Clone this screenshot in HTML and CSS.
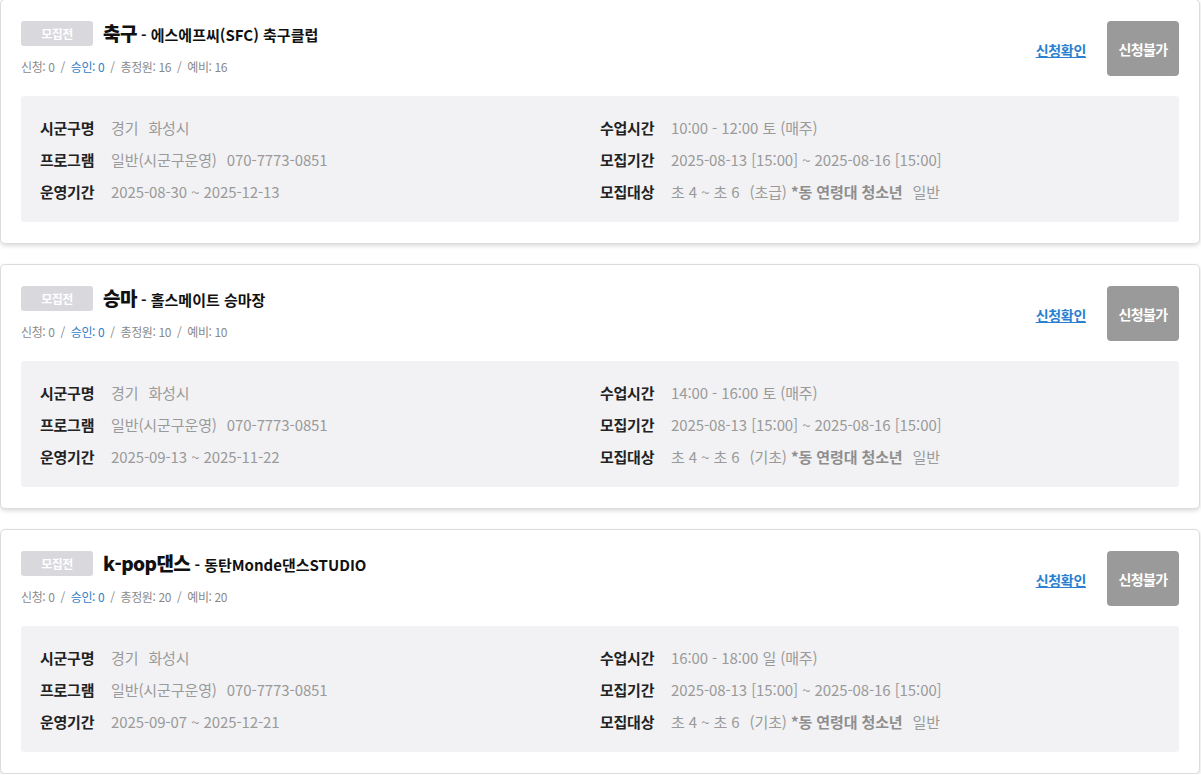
FILE: index.html
```html
<!DOCTYPE html>
<html lang="ko">
<head>
<meta charset="utf-8">
<title>프로그램 목록</title>
<link rel="stylesheet" href="styles.css">
</head>
<body>
<div class="list">
  <div class="card">
    <div class="head">
      <div class="head-left">
        <div class="title-row">
          <span class="badge">모집전</span>
          <span class="title"><b class="main">축구</b> - 에스에프씨(SFC) 축구클럽</span>
        </div>
        <div class="stats">신청: 0<span class="sep">/</span><span class="ok">승인: 0</span><span class="sep">/</span>총정원: 16<span class="sep">/</span>예비: 16</div>
      </div>
      <div class="head-right">
        <a class="check" href="#">신청확인</a>
        <span class="btn">신청불가</span>
      </div>
    </div>
    <div class="info">
      <div class="col">
        <div class="row"><span class="lbl">시군구명</span><span class="val">경기</span><span class="val">화성시</span></div>
        <div class="row"><span class="lbl">프로그램</span><span class="val">일반(시군구운영)</span><span class="val">070-7773-0851</span></div>
        <div class="row"><span class="lbl">운영기간</span><span class="val">2025-08-30 ~ 2025-12-13</span></div>
      </div>
      <div class="col">
        <div class="row"><span class="lbl">수업시간</span><span class="val">10:00 - 12:00 토 (매주)</span></div>
        <div class="row"><span class="lbl">모집기간</span><span class="val">2025-08-13 [15:00] ~ 2025-08-16 [15:00]</span></div>
        <div class="row"><span class="lbl">모집대상</span><span class="val">초 4 ~ 초 6</span><span class="val">(초급) <b>*동 연령대 청소년</b></span><span class="val">일반</span></div>
      </div>
    </div>
  </div>

  <div class="card">
    <div class="head">
      <div class="head-left">
        <div class="title-row">
          <span class="badge">모집전</span>
          <span class="title"><b class="main">승마</b> - 홀스메이트 승마장</span>
        </div>
        <div class="stats">신청: 0<span class="sep">/</span><span class="ok">승인: 0</span><span class="sep">/</span>총정원: 10<span class="sep">/</span>예비: 10</div>
      </div>
      <div class="head-right">
        <a class="check" href="#">신청확인</a>
        <span class="btn">신청불가</span>
      </div>
    </div>
    <div class="info">
      <div class="col">
        <div class="row"><span class="lbl">시군구명</span><span class="val">경기</span><span class="val">화성시</span></div>
        <div class="row"><span class="lbl">프로그램</span><span class="val">일반(시군구운영)</span><span class="val">070-7773-0851</span></div>
        <div class="row"><span class="lbl">운영기간</span><span class="val">2025-09-13 ~ 2025-11-22</span></div>
      </div>
      <div class="col">
        <div class="row"><span class="lbl">수업시간</span><span class="val">14:00 - 16:00 토 (매주)</span></div>
        <div class="row"><span class="lbl">모집기간</span><span class="val">2025-08-13 [15:00] ~ 2025-08-16 [15:00]</span></div>
        <div class="row"><span class="lbl">모집대상</span><span class="val">초 4 ~ 초 6</span><span class="val">(기초) <b>*동 연령대 청소년</b></span><span class="val">일반</span></div>
      </div>
    </div>
  </div>

  <div class="card">
    <div class="head">
      <div class="head-left">
        <div class="title-row">
          <span class="badge">모집전</span>
          <span class="title"><b class="main">k-pop댄스</b> - 동탄Monde댄스STUDIO</span>
        </div>
        <div class="stats">신청: 0<span class="sep">/</span><span class="ok">승인: 0</span><span class="sep">/</span>총정원: 20<span class="sep">/</span>예비: 20</div>
      </div>
      <div class="head-right">
        <a class="check" href="#">신청확인</a>
        <span class="btn">신청불가</span>
      </div>
    </div>
    <div class="info">
      <div class="col">
        <div class="row"><span class="lbl">시군구명</span><span class="val">경기</span><span class="val">화성시</span></div>
        <div class="row"><span class="lbl">프로그램</span><span class="val">일반(시군구운영)</span><span class="val">070-7773-0851</span></div>
        <div class="row"><span class="lbl">운영기간</span><span class="val">2025-09-07 ~ 2025-12-21</span></div>
      </div>
      <div class="col">
        <div class="row"><span class="lbl">수업시간</span><span class="val">16:00 - 18:00 일 (매주)</span></div>
        <div class="row"><span class="lbl">모집기간</span><span class="val">2025-08-13 [15:00] ~ 2025-08-16 [15:00]</span></div>
        <div class="row"><span class="lbl">모집대상</span><span class="val">초 4 ~ 초 6</span><span class="val">(기초) <b>*동 연령대 청소년</b></span><span class="val">일반</span></div>
      </div>
    </div>
  </div>
</div>
</body>
</html>
```

FILE: styles.css
```css
html, body {
  margin: 0;
  padding: 0;
  background: #fff;
}
body {
  font-family: "Noto Sans CJK KR", "Noto Sans", sans-serif;
  color: #222;
}
.list {
  display: flex;
  flex-direction: column;
  gap: 20px;
  margin-top: -1px;
  width: 1200px;
}
.card {
  background: #fff;
  border: 1px solid #dcdcdc;
  border-radius: 5px;
  box-shadow: 0 2px 4px rgba(0, 0, 0, 0.14);
  padding: 21px 20px 21px 20px;
}
.head {
  display: flex;
  justify-content: space-between;
  align-items: center;
  height: 55px;
}
.head-left {
  display: flex;
  flex-direction: column;
}
.title-row {
  display: flex;
  align-items: center;
  height: 25px;
  gap: 10px;
}
.badge {
  display: inline-flex;
  align-items: center;
  justify-content: center;
  width: 72px;
  height: 25px;
  background: #d8d8dd;
  color: #fff;
  border-radius: 3px;
  font-size: 12px;
  font-weight: 700;
  letter-spacing: -0.5px;
}
.title {
  font-size: 15px;
  font-weight: 700;
  color: #111;
  letter-spacing: 0;
  line-height: 25px;
}
.title .main {
  font-size: 19px;
  letter-spacing: -0.6px;
}
.stats {
  margin-top: 12px;
  font-size: 12px;
  line-height: 18px;
  color: #8a8a8a;
  letter-spacing: -0.4px;
}
.stats .ok {
  color: #2f80c8;
}
.stats .sep {
  margin: 0 6px;
}
.head-right {
  display: flex;
  align-items: center;
  gap: 21px;
}
.check {
  color: #2b7fd0;
  font-size: 14px;
  font-weight: 700;
  text-decoration: underline;
  letter-spacing: -0.3px;
  margin-top: 3px;
}
.btn {
  display: inline-flex;
  align-items: center;
  justify-content: center;
  width: 72px;
  height: 55px;
  background: #9a9a9a;
  color: #fff;
  border-radius: 4px;
  font-size: 14px;
  font-weight: 700;
  letter-spacing: -0.6px;
}
.info {
  margin-top: 20px;
  background: #f2f2f4;
  border-radius: 3px;
  padding: 15px 19px;
  display: grid;
  grid-template-columns: 1fr 1fr;
}
.row {
  height: 32px;
  display: flex;
  align-items: center;
  font-size: 15px;
}
.lbl {
  font-weight: 700;
  color: #222;
  width: 71px;
  flex: none;
  letter-spacing: -0.25px;
}
.val {
  color: #9a9a9a;
  margin-right: 10px;
  letter-spacing: -0.1px;
}
.val b {
  font-weight: 700;
  color: #8e8e8e;
}
```
